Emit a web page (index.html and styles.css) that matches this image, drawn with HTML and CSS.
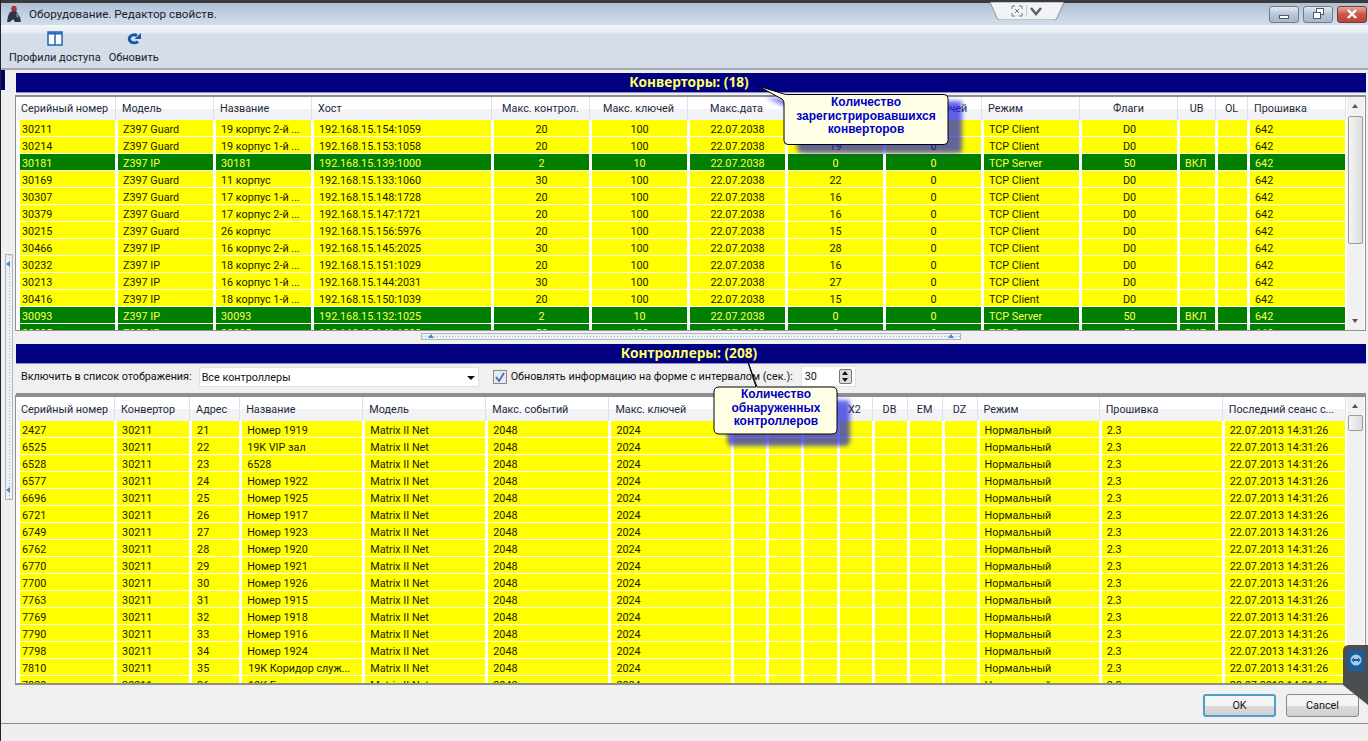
FILE: index.html
```html
<!DOCTYPE html>
<html lang="ru">
<head>
    <meta charset="UTF-8">
    <title>Оборудование. Редактор свойств.</title>
    <link rel="stylesheet" href="styles.css">
</head>
<body>
<div class="window">
    <div class="titlebar">
        <svg class="app-icon" width="16" height="18" viewBox="0 0 16 18">
            <path d="M6 1h4l1 4-2 2h-3l-1-3z" fill="#a33a30"/>
            <path d="M4 7l6-1 4 6 1 5H9l-2-3-3 3H1l1-6z" fill="#2f3550"/>
            <path d="M10 8l3 3-2 2z" fill="#8a96b8"/>
        </svg>
        <span class="title-text">Оборудование. Редактор свойств.</span>
        <div class="win-buttons">
            <div class="win-btn"><span class="glyph-min"></span></div>
            <div class="win-btn"><span class="glyph-restore"></span><span class="glyph-restore back"></span></div>
            <div class="win-btn close">
                <svg width="12" height="10" viewBox="0 0 12 10"><path d="M2 1l8 8M10 1l-8 8" stroke="#fff" stroke-width="2.4"/></svg>
            </div>
        </div>
    </div>

    <div class="toolbar">
        <div class="tool">
            <svg width="16" height="15" viewBox="0 0 16 15">
                <rect x="1" y="1" width="14" height="13" fill="#fff" stroke="#1f66b5" stroke-width="1.5"/>
                <path d="M8 1v13" stroke="#1f66b5" stroke-width="1.5"/>
                <path d="M1 2.5h14" stroke="#1f66b5" stroke-width="2"/>
            </svg>
            <span>Профили доступа</span>
        </div>
        <div class="tool">
            <svg width="16" height="15" viewBox="0 0 16 15">
                <path d="M11 4.500A5 4 0 1 0 12 10.500" fill="none" stroke="#1559a8" stroke-width="3"/>
                <path d="M15 2v6H8.500z" fill="#1559a8"/>
            </svg>
            <span>Обновить</span>
        </div>
    </div>

    <div class="workspace">
        <div class="rail">
            <div class="rail-cap"></div>
            <div class="rail-handle"><i class="tri-left"></i><i class="tri-left low"></i></div>
        </div>
        <div class="panels">
            <div class="section-head">Конверторы: (18)</div>
            <div class="grid-frame top-frame">
                <div class="grid-clip">
                    <table class="grid">
                        <colgroup>
                            <col class="w99"><col class="w98"><col class="w98"><col class="w180"><col class="w98"><col class="w98"><col class="w98"><col class="w98"><col class="w98"><col class="w98"><col class="w98"><col class="w38"><col class="w32"><col class="w98">
                        </colgroup>
                        <thead>
                            <tr><th>Серийный номер</th><th>Модель</th><th>Название</th><th>Хост</th><th class="mid">Макс. контрол.</th><th class="mid">Макс. ключей</th><th class="mid">Макс.дата</th><th class="mid">Контроллеры</th><th class="mid">Своб. ключей</th><th>Режим</th><th class="mid">Флаги</th><th class="mid">UB</th><th class="mid">OL</th><th>Прошивка</th></tr>
                        </thead>
                        <tbody>
                            <tr><td>30211</td><td>Z397 Guard</td><td>19 корпус 2-й ...</td><td>192.168.15.154:1059</td><td class="mid">20</td><td class="mid">100</td><td class="mid">22.07.2038</td><td class="mid">20</td><td class="mid">0</td><td>TCP Client</td><td class="mid">D0</td><td></td><td></td><td>642</td></tr>
                            <tr><td>30214</td><td>Z397 Guard</td><td>19 корпус 1-й ...</td><td>192.168.15.153:1058</td><td class="mid">20</td><td class="mid">100</td><td class="mid">22.07.2038</td><td class="mid">19</td><td class="mid">0</td><td>TCP Client</td><td class="mid">D0</td><td></td><td></td><td>642</td></tr>
                            <tr class="on"><td>30181</td><td>Z397 IP</td><td>30181</td><td>192.168.15.139:1000</td><td class="mid">2</td><td class="mid">10</td><td class="mid">22.07.2038</td><td class="mid">0</td><td class="mid">0</td><td>TCP Server</td><td class="mid">50</td><td>ВКЛ</td><td></td><td>642</td></tr>
                            <tr><td>30169</td><td>Z397 Guard</td><td>11 корпус</td><td>192.168.15.133:1060</td><td class="mid">30</td><td class="mid">100</td><td class="mid">22.07.2038</td><td class="mid">22</td><td class="mid">0</td><td>TCP Client</td><td class="mid">D0</td><td></td><td></td><td>642</td></tr>
                            <tr><td>30307</td><td>Z397 Guard</td><td>17 корпус 1-й ...</td><td>192.168.15.148:1728</td><td class="mid">20</td><td class="mid">100</td><td class="mid">22.07.2038</td><td class="mid">16</td><td class="mid">0</td><td>TCP Client</td><td class="mid">D0</td><td></td><td></td><td>642</td></tr>
                            <tr><td>30379</td><td>Z397 Guard</td><td>17 корпус 2-й ...</td><td>192.168.15.147:1721</td><td class="mid">20</td><td class="mid">100</td><td class="mid">22.07.2038</td><td class="mid">16</td><td class="mid">0</td><td>TCP Client</td><td class="mid">D0</td><td></td><td></td><td>642</td></tr>
                            <tr><td>30215</td><td>Z397 Guard</td><td>26 корпус</td><td>192.168.15.156:5976</td><td class="mid">20</td><td class="mid">100</td><td class="mid">22.07.2038</td><td class="mid">15</td><td class="mid">0</td><td>TCP Client</td><td class="mid">D0</td><td></td><td></td><td>642</td></tr>
                            <tr><td>30466</td><td>Z397 IP</td><td>16 корпус 2-й ...</td><td>192.168.15.145:2025</td><td class="mid">30</td><td class="mid">100</td><td class="mid">22.07.2038</td><td class="mid">28</td><td class="mid">0</td><td>TCP Client</td><td class="mid">D0</td><td></td><td></td><td>642</td></tr>
                            <tr><td>30232</td><td>Z397 IP</td><td>18 корпус 2-й ...</td><td>192.168.15.151:1029</td><td class="mid">20</td><td class="mid">100</td><td class="mid">22.07.2038</td><td class="mid">16</td><td class="mid">0</td><td>TCP Client</td><td class="mid">D0</td><td></td><td></td><td>642</td></tr>
                            <tr><td>30213</td><td>Z397 IP</td><td>16 корпус 1-й ...</td><td>192.168.15.144:2031</td><td class="mid">30</td><td class="mid">100</td><td class="mid">22.07.2038</td><td class="mid">27</td><td class="mid">0</td><td>TCP Client</td><td class="mid">D0</td><td></td><td></td><td>642</td></tr>
                            <tr><td>30416</td><td>Z397 IP</td><td>18 корпус 1-й ...</td><td>192.168.15.150:1039</td><td class="mid">20</td><td class="mid">100</td><td class="mid">22.07.2038</td><td class="mid">15</td><td class="mid">0</td><td>TCP Client</td><td class="mid">D0</td><td></td><td></td><td>642</td></tr>
                            <tr class="on"><td>30093</td><td>Z397 IP</td><td>30093</td><td>192.168.15.132:1025</td><td class="mid">2</td><td class="mid">10</td><td class="mid">22.07.2038</td><td class="mid">0</td><td class="mid">0</td><td>TCP Server</td><td class="mid">50</td><td>ВКЛ</td><td></td><td>642</td></tr>
                            <tr class="on"><td>30095</td><td>Z397 IP</td><td>30095</td><td>192.168.15.141:1000</td><td class="mid">50</td><td class="mid">100</td><td class="mid">22.07.2038</td><td class="mid">0</td><td class="mid">0</td><td>TCP Server</td><td class="mid">50</td><td>ВКЛ</td><td></td><td>642</td></tr>
                        </tbody>
                    </table>
                </div>
                <div class="scrollbar">
                    <div class="sb-up"></div>
                    <div class="sb-thumb top-thumb"></div>
                    <div class="sb-down"></div>
                </div>
            </div>

            <div class="splitter"><div class="split-handle"><i class="tri"></i><i class="tri right"></i></div></div>

            <div class="section-head">Контроллеры: (208)</div>
            <div class="filter">
                <span>Включить в список отображения:</span>
                <div class="combo">Все контроллеры<i class="combo-arrow"></i></div>
                <div class="check">
                    <svg width="12" height="12" viewBox="0 0 12 12"><path d="M2 6l3 4 5-8" fill="none" stroke="#4a6ea8" stroke-width="1.800"/></svg>
                </div>
                <span>Обновлять информацию на форме с интервалом (сек.):</span>
                <div class="spin">30<div class="spin-btns"><i class="spin-up"></i><i class="spin-down"></i></div></div>
            </div>
            <div class="grid-frame low-frame">
                <div class="grid-clip">
                    <table class="grid low">
                        <colgroup>
                            <col class="w98"><col class="w75"><col class="w50"><col class="w123"><col class="w123"><col class="w123"><col class="w123"><col class="w35"><col class="w35"><col class="w35"><col class="w35"><col class="w35"><col class="w35"><col class="w35"><col class="w122"><col class="w123"><col class="w123">
                        </colgroup>
                        <thead>
                            <tr><th>Серийный номер</th><th>Конвертор</th><th>Адрес</th><th>Название</th><th>Модель</th><th>Макс. событий</th><th>Макс. ключей</th><th></th><th></th><th></th><th class="mid">X2</th><th class="mid">DB</th><th class="mid">EM</th><th class="mid">DZ</th><th>Режим</th><th>Прошивка</th><th>Последний сеанс с...</th></tr>
                        </thead>
                        <tbody>
                            <tr><td>2427</td><td>30211</td><td>21</td><td>Номер 1919</td><td>Matrix II Net</td><td>2048</td><td>2024</td><td></td><td></td><td></td><td></td><td></td><td></td><td></td><td>Нормальный</td><td>2.3</td><td>22.07.2013 14:31:26</td></tr>
                            <tr><td>6525</td><td>30211</td><td>22</td><td>19K VIP зал</td><td>Matrix II Net</td><td>2048</td><td>2024</td><td></td><td></td><td></td><td></td><td></td><td></td><td></td><td>Нормальный</td><td>2.3</td><td>22.07.2013 14:31:26</td></tr>
                            <tr><td>6528</td><td>30211</td><td>23</td><td>6528</td><td>Matrix II Net</td><td>2048</td><td>2024</td><td></td><td></td><td></td><td></td><td></td><td></td><td></td><td>Нормальный</td><td>2.3</td><td>22.07.2013 14:31:26</td></tr>
                            <tr><td>6577</td><td>30211</td><td>24</td><td>Номер 1922</td><td>Matrix II Net</td><td>2048</td><td>2024</td><td></td><td></td><td></td><td></td><td></td><td></td><td></td><td>Нормальный</td><td>2.3</td><td>22.07.2013 14:31:26</td></tr>
                            <tr><td>6696</td><td>30211</td><td>25</td><td>Номер 1925</td><td>Matrix II Net</td><td>2048</td><td>2024</td><td></td><td></td><td></td><td></td><td></td><td></td><td></td><td>Нормальный</td><td>2.3</td><td>22.07.2013 14:31:26</td></tr>
                            <tr><td>6721</td><td>30211</td><td>26</td><td>Номер 1917</td><td>Matrix II Net</td><td>2048</td><td>2024</td><td></td><td></td><td></td><td></td><td></td><td></td><td></td><td>Нормальный</td><td>2.3</td><td>22.07.2013 14:31:26</td></tr>
                            <tr><td>6749</td><td>30211</td><td>27</td><td>Номер 1923</td><td>Matrix II Net</td><td>2048</td><td>2024</td><td></td><td></td><td></td><td></td><td></td><td></td><td></td><td>Нормальный</td><td>2.3</td><td>22.07.2013 14:31:26</td></tr>
                            <tr><td>6762</td><td>30211</td><td>28</td><td>Номер 1920</td><td>Matrix II Net</td><td>2048</td><td>2024</td><td></td><td></td><td></td><td></td><td></td><td></td><td></td><td>Нормальный</td><td>2.3</td><td>22.07.2013 14:31:26</td></tr>
                            <tr><td>6770</td><td>30211</td><td>29</td><td>Номер 1921</td><td>Matrix II Net</td><td>2048</td><td>2024</td><td></td><td></td><td></td><td></td><td></td><td></td><td></td><td>Нормальный</td><td>2.3</td><td>22.07.2013 14:31:26</td></tr>
                            <tr><td>7700</td><td>30211</td><td>30</td><td>Номер 1926</td><td>Matrix II Net</td><td>2048</td><td>2024</td><td></td><td></td><td></td><td></td><td></td><td></td><td></td><td>Нормальный</td><td>2.3</td><td>22.07.2013 14:31:26</td></tr>
                            <tr><td>7763</td><td>30211</td><td>31</td><td>Номер 1915</td><td>Matrix II Net</td><td>2048</td><td>2024</td><td></td><td></td><td></td><td></td><td></td><td></td><td></td><td>Нормальный</td><td>2.3</td><td>22.07.2013 14:31:26</td></tr>
                            <tr><td>7769</td><td>30211</td><td>32</td><td>Номер 1918</td><td>Matrix II Net</td><td>2048</td><td>2024</td><td></td><td></td><td></td><td></td><td></td><td></td><td></td><td>Нормальный</td><td>2.3</td><td>22.07.2013 14:31:26</td></tr>
                            <tr><td>7790</td><td>30211</td><td>33</td><td>Номер 1916</td><td>Matrix II Net</td><td>2048</td><td>2024</td><td></td><td></td><td></td><td></td><td></td><td></td><td></td><td>Нормальный</td><td>2.3</td><td>22.07.2013 14:31:26</td></tr>
                            <tr><td>7798</td><td>30211</td><td>34</td><td>Номер 1924</td><td>Matrix II Net</td><td>2048</td><td>2024</td><td></td><td></td><td></td><td></td><td></td><td></td><td></td><td>Нормальный</td><td>2.3</td><td>22.07.2013 14:31:26</td></tr>
                            <tr><td>7810</td><td>30211</td><td>35</td><td class="shift">19K Коридор служ...</td><td>Matrix II Net</td><td>2048</td><td>2024</td><td></td><td></td><td></td><td></td><td></td><td></td><td></td><td>Нормальный</td><td>2.3</td><td>22.07.2013 14:31:26</td></tr>
                            <tr><td>7820</td><td>30211</td><td>36</td><td class="shift">19K Голд зал</td><td>Matrix II Net</td><td>2048</td><td>2024</td><td></td><td></td><td></td><td></td><td></td><td></td><td></td><td>Нормальный</td><td>2.3</td><td>22.07.2013 14:31:26</td></tr>
                        </tbody>
                    </table>
                </div>
                <div class="scrollbar">
                    <div class="sb-up"></div>
                    <div class="sb-thumb low-thumb"></div>
                    <div class="sb-down"></div>
                </div>
            </div>
        </div>
    </div>

    <div class="actions">
        <div class="btn default">OK</div>
        <div class="btn">Cancel</div>
    </div>
    <div class="statusbar"></div>
</div>

<!-- things lying over the window -->
<div class="grab-tab">
    <svg width="74" height="18" viewBox="0 0 74 18">
        <path d="M0 0h74l-7 16q-1 2-3 2H10q-2 0-3-2z" fill="#f1f3f6" stroke="#8a93a0"/>
        <path d="M22 4h3M22 4v3M32 4h-3M32 4v3M22 14h3M22 14v-3M32 14h-3M32 14v-3M25 7l4 4M29 7l-4 4" stroke="#6a7480" fill="none"/>
        <path d="M36.500 3v12" stroke="#c5cad2"/>
        <path d="M41 6l5 6 5-6" stroke="#5a6470" stroke-width="2.500" fill="none"/>
    </svg>
</div>

<div class="callout callout-a">
    <svg class="callout-art" width="225" height="75" viewBox="0 0 225 75">
        <path d="M8 12l30 4h165q2 0 2 2v48q0 2-8 2H48q-8 0-8-4V26z" fill="#1a1ae0" opacity=".68" filter="url(#soft)"/>
        <path d="M1 1L27 9q1 .5 4 .5h156q4 0 4 4v42q0 4-4 4H31q-4 0-4-4V18q0-3-2-4z" fill="#ffffe6" stroke="#000"/>
        <defs><filter id="soft"><feGaussianBlur stdDeviation="2"/></filter></defs>
    </svg>
    <div class="callout-text a">Количество<br>зарегистрировавшихся<br>конверторов</div>
</div>

<div class="callout callout-b">
    <svg class="callout-art" width="150" height="95" viewBox="0 0 150 95">
        <path d="M20 42h115q2 0 2 6v34q0 6-6 6H20q-6 0-6-6V54q0-6 6-6z" fill="#1a1ae0" opacity=".68" filter="url(#soft2)"/>
        <path d="M34 1L44 29h75q5 0 5 5v37q0 5-5 5H6q-5 0-5-5V34q0-5 5-5h37z" fill="#ffffe6" stroke="#000"/>
        <defs><filter id="soft2"><feGaussianBlur stdDeviation="2"/></filter></defs>
    </svg>
    <div class="callout-text b">Количество<br>обнаруженных<br>контроллеров</div>
</div>

<div class="tv-tab">
    <svg width="25" height="60" viewBox="0 0 25 60">
        <path d="M25 0H6Q0 0 0 6V40L25 60z" fill="#4a4d52"/>
        <rect x="5" y="5" width="16" height="21" rx="3" fill="#1a5c9c"/>
        <circle cx="13" cy="15" r="5.500" fill="#a8cbe8"/>
        <path d="M8.500 15l2.500-2.500v1.500h4v-1.500l2.500 2.500-2.500 2.500v-1.500h-4v1.500z" fill="#1a5c9c"/>
    </svg>
</div>
</body>
</html>
```

FILE: styles.css
```css
* {
    box-sizing: border-box;
}
html, body {
    margin: 0;
    height: 100%;
    overflow: hidden;
}
body {
    font-family: Roboto, sans-serif;
    font-size: 10.800px;
    color: #111;
    background-color: #f0f0f0;
    position: relative;
}
.window {
    width: 1368px;
    height: 741px;
    display: flex;
    flex-direction: column;
    border-left: 1px solid #222;
}

/* title */
.titlebar {
    height: 25px;
    flex: none;
    display: flex;
    align-items: center;
    padding-left: 5px;
    border-top: 3px solid #3a3a3a;
    background: linear-gradient(#aebfd4, #c5d3e4 60%, #d2ddea);
}
.app-icon {
    flex: none;
}
.title-text {
    margin-left: 7px;
    font-size: 11.700px;
    color: #1c1c1c;
}
.win-buttons {
    margin-left: auto;
    margin-right: 1px;
    display: flex;
    gap: 4px;
}
.win-btn {
    width: 30px;
    height: 17px;
    position: relative;
    display: flex;
    align-items: center;
    justify-content: center;
    border: 1px solid #6f7c8c;
    border-radius: 3px;
    background: linear-gradient(#e3e9f1, #b8c5d6 50%, #a6b6c9);
}
.win-btn.close {
    border-color: #7a3a34;
    background: linear-gradient(#e8a79c, #c8584a 50%, #b9433a);
}
.glyph-min {
    width: 10px;
    height: 4px;
    margin-top: 5px;
    border: 1px solid #4f5866;
    background-color: #fff;
}
.glyph-restore {
    width: 8px;
    height: 7px;
    margin: 3px 3px 0 0;
    border: 1px solid #4f5866;
    background-color: #fff;
    position: relative;
    z-index: 1;
}
.glyph-restore.back {
    position: absolute;
    top: 1px;
    left: 12px;
    margin: 0;
    z-index: 0;
}

/* toolbar */
.toolbar {
    height: 45px;
    flex: none;
    display: flex;
    gap: 8px;
    padding: 6px 0 0 8px;
    background: linear-gradient(#f3f6fa 0, #e6ebf3 8px, #d6ddea 9px, #d5dcea 100%);
    border-bottom: 2px solid #a8a8a8;
}
.tool {
    display: flex;
    flex-direction: column;
    align-items: center;
    gap: 5px;
    font-size: 11px;
    line-height: 14px;
    color: #222;
}

/* main part */
.workspace {
    height: 615px;
    flex: none;
    display: flex;
}
.rail {
    width: 14px;
    flex: none;
    display: flex;
    flex-direction: column;
    background-color: #f0f0f0;
}
.rail-cap {
    width: 4px;
    height: 20px;
    margin-bottom: 164px;
    background-color: #000070;
}
.rail-handle {
    width: 8px;
    height: 246px;
    margin-left: 4px;
    position: relative;
    border: 1px solid #a9b6c6;
    background: repeating-linear-gradient(#8fb2dc 0 1px, transparent 1px 3px) center / 1px 100% no-repeat;
}
.tri-left {
    position: absolute;
    left: 0;
    top: 6px;
    border-top: 3px solid transparent;
    border-bottom: 3px solid transparent;
    border-right: 4px solid #4a86c8;
}
.tri-left.low {
    top: auto;
    bottom: 6px;
}
.panels {
    width: 1351px;
    flex: none;
    padding-top: 3px;
    display: flex;
    flex-direction: column;
}
.section-head {
    height: 20px;
    flex: none;
    margin-left: 1px;
    padding-right: 4px;
    background-color: #000080;
    border-bottom: 1px solid #8f8fc8;
    color: #ffff66;
    font-family: "Noto Sans", sans-serif;
    font-size: 13.700px;
    font-weight: bold;
    line-height: 17px;
    text-align: center;
}
.grid-frame {
    display: flex;
    flex: none;
    background-color: #fff;
    border: 1px solid #8f8f8f;
    border-top-width: 2px;
}
.top-frame {
    height: 236px;
    margin-top: 2px;
}
.low-frame {
    height: 290px;
    border-bottom-width: 2px;
}
.grid-clip {
    width: 1331px;
    flex: none;
    overflow: hidden;
    padding-left: 1px;
}

/* tables */
.grid {
    width: 1329px;
    table-layout: fixed;
    border-collapse: separate;
    border-spacing: 0;
}
.w35 { width: 35px; }
.w32 { width: 32px; }
.w38 { width: 38px; }
.w50 { width: 50px; }
.w75 { width: 75px; }
.w98 { width: 98px; }
.w99 { width: 99px; }
.w122 { width: 122px; }
.w123 { width: 123px; }
.w180 { width: 180px; }
.grid th {
    height: 23px;
    padding: 0 0 0 6px;
    font-weight: normal;
    text-align: left;
    color: #1e2a3a;
    white-space: nowrap;
    overflow: hidden;
    background: linear-gradient(#fff 50%, #f1f3f7 50%);
    border-right: 1px solid #dde1e7;
}
.grid th:first-child {
    padding-left: 4px;
}
.grid.low th {
    height: 24px;
}
.grid td {
    height: 17px;
    padding: 3px 0 0 5px;
    white-space: nowrap;
    overflow: hidden;
    line-height: 13px;
    background-color: #ffff00;
    color: #1a1a00;
    border-left: 2px solid #fff;
    border-right: 1px solid #fff;
    border-bottom: 1px solid #fff;
}
.grid td:first-child {
    border-left-width: 3px;
    padding-left: 2px;
}
.grid th.mid,
.grid td.mid {
    text-align: center;
    padding-left: 0;
}
.grid td.shift {
    padding-left: 6px;
}
.grid tr.on td {
    background-color: #008000;
    color: #ffff55;
}

/* scrollbars */
.scrollbar {
    width: 17px;
    flex: none;
    display: flex;
    flex-direction: column;
    background-color: #f1f1f1;
    position: relative;
}
.sb-up,
.sb-down {
    height: 18px;
    flex: none;
    position: relative;
}
.sb-up::after,
.sb-down::after {
    content: "";
    position: absolute;
    left: 5px;
    top: 7px;
    border-left: 3.500px solid transparent;
    border-right: 3.500px solid transparent;
}
.sb-up::after {
    border-bottom: 4px solid #555;
}
.sb-down::after {
    border-top: 4px solid #555;
}
.sb-thumb {
    flex: none;
    margin: 0 1px;
    border: 1px solid #9b9b9b;
    border-radius: 2px;
    background: linear-gradient(90deg, #f4f4f4, #dcdcdc);
}
.top-thumb {
    height: 128px;
    margin-top: 1px;
}
.low-thumb {
    height: 16px;
}
.sb-down {
    margin-top: auto;
}

/* splitter */
.splitter {
    height: 13px;
    flex: none;
    display: flex;
    justify-content: center;
    padding-top: 2px;
    padding-left: 1px;
}
.split-handle {
    width: 540px;
    height: 7px;
    position: relative;
    border: 1px solid #a9b6c6;
    background: repeating-linear-gradient(90deg, #8fb2dc 0 1px, transparent 1px 3px) center / 100% 1px no-repeat;
}
.tri {
    position: absolute;
    top: 0;
    left: 6px;
    border-left: 3px solid transparent;
    border-right: 3px solid transparent;
    border-bottom: 4px solid #4a86c8;
}
.tri.right {
    left: auto;
    right: 6px;
}

/* filter line */
.filter {
    height: 31px;
    flex: none;
    display: flex;
    align-items: center;
    padding: 0 0 4px 5px;
    margin-left: 1px;
    background-color: #f0f0f0;
    border-bottom: 2px solid #8f8f8f;
}
.combo {
    width: 280px;
    height: 20px;
    margin-left: 7px;
    padding-left: 2px;
    line-height: 19px;
    position: relative;
    background-color: #fff;
    border: 1px solid #e2e2e2;
}
.combo-arrow {
    position: absolute;
    right: 3px;
    top: 8px;
    border-left: 4px solid transparent;
    border-right: 4px solid transparent;
    border-top: 4px solid #111;
}
.check {
    width: 14px;
    height: 14px;
    margin: 0 4px 0 14px;
    border: 1px solid #8a8a8a;
    background-color: #e6ebf2;
    display: flex;
    align-items: center;
    justify-content: center;
}
.spin {
    width: 55px;
    height: 21px;
    margin-left: 8px;
    padding-left: 3px;
    line-height: 20px;
    position: relative;
    background-color: #fff;
    border: 1px solid #e2e2e2;
}
.spin-btns {
    position: absolute;
    right: 3px;
    top: 2px;
    width: 13px;
    height: 15px;
    border: 1px solid #777;
    border-radius: 2px;
    background-color: #ddd;
}
.spin-up,
.spin-down {
    position: absolute;
    left: 2px;
    border-left: 3.500px solid transparent;
    border-right: 3.500px solid transparent;
}
.spin-up {
    top: 1px;
    border-bottom: 4px solid #111;
}
.spin-down {
    bottom: 1px;
    border-top: 4px solid #111;
}

/* bottom */
.actions {
    height: 39px;
    flex: none;
    display: flex;
    justify-content: flex-end;
    align-items: flex-start;
    gap: 10px;
    padding: 9px 9px 0 0;
    border-bottom: 1px solid #8f8f8f;
}
.btn {
    width: 73px;
    height: 23px;
    text-align: center;
    line-height: 21px;
    border: 1px solid #8a8a8a;
    border-radius: 3px;
    background: linear-gradient(#f4f4f4 50%, #dcdcdc 50%, #d0d0d0);
}
.btn.default {
    border: 2px solid #4d9fc9;
    line-height: 19px;
}
.statusbar {
    flex: 1;
    background-color: #f0eeee;
}

/* overlays */
.grab-tab {
    position: absolute;
    left: 990px;
    top: 2px;
    height: 18px;
}
.callout {
    position: absolute;
}
.callout-art {
    display: block;
    overflow: visible;
}
.callout-a {
    left: 757px;
    top: 85px;
}
.callout-b {
    left: 713px;
    top: 358px;
}
.callout-text {
    position: absolute;
    text-align: center;
    font-family: "Liberation Sans", sans-serif;
    font-size: 12px;
    font-weight: bold;
    line-height: 13.500px;
    color: #0000c8;
}
.callout-text.a {
    left: 27px;
    top: 11px;
    width: 164px;
}
.callout-text.b {
    left: 1px;
    top: 30px;
    width: 124px;
}
.tv-tab {
    position: absolute;
    left: 1343px;
    top: 645px;
    height: 60px;
}
```
